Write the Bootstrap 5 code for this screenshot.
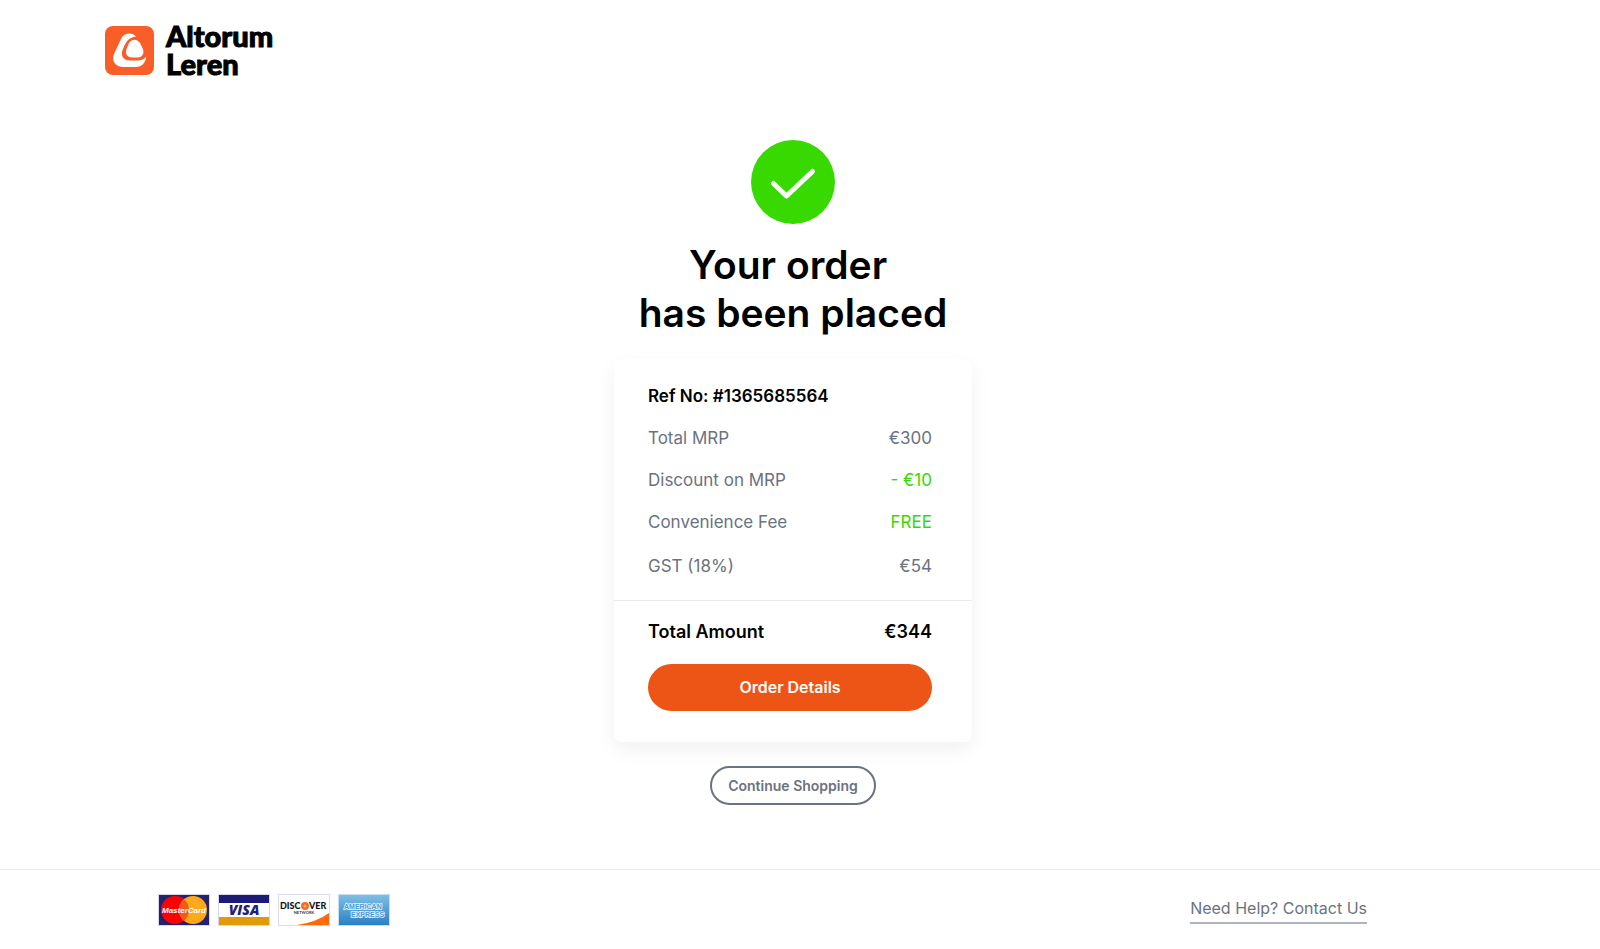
<!DOCTYPE html>
<html lang="en">
<head>
<meta charset="utf-8">
<meta name="viewport" content="width=device-width, initial-scale=1">
<title>Altorum Leren – Order placed</title>
<link href="https://cdn.jsdelivr.net/npm/bootstrap@5.3.0/dist/css/bootstrap.min.css" rel="stylesheet">
<style>
  :root { --ink: #000; --slate: #6b7280; --ok: #38d900; --brand: #ed5516; --rule: #ebebed; }
  body { font-family: Inter, "Open Sans", sans-serif; color: var(--ink); background: #fff; }
  .site-head { padding: 22px 105px 0; }
  .brand-name { font: 900 29px/28px Lato, sans-serif; color: var(--ink); -webkit-text-stroke: 1px var(--ink); }
  .site-main { padding: 62px 14px 64px 0; }
  .placed-title { font-size: 39px; line-height: 48px; font-weight: 600; margin: 17px 0 22px; }
  .order-box { width: 358px; max-width: 100%; border: 0; border-radius: 8px; box-shadow: 0 8px 20px rgba(0, 0, 0, .06); font-size: 17px; line-height: 28px; }
  .order-lines { padding: 23px 40px 20px 34px; gap: 14px; color: var(--slate); }
  .order-lines > :last-child { margin-top: 2px; }
  .order-sum { padding: 17px 40px 31px 34px; border-top: 1px solid var(--rule); }
  .strong-line { color: var(--ink); font-weight: 600; }
  .total-line { font-size: 18px; }
  .ok-text { color: var(--ok); }
  .btn-details { --bs-btn-color: #fff; --bs-btn-bg: var(--brand); --bs-btn-hover-color: #fff; --bs-btn-hover-bg: #d94a10; --bs-btn-border-color: transparent; height: 47px; padding: 0 16px 2px; margin-top: 18px; font-size: 16px; font-weight: 600; }
  .btn-shop { --bs-btn-color: var(--slate); --bs-btn-border-color: var(--slate); --bs-btn-hover-color: #fff; --bs-btn-hover-bg: var(--slate); height: 39px; border-width: 2px; padding: 0 16px; margin-top: 24px; font-size: 14px; font-weight: 600; }
  .site-foot { border-top: 1px solid var(--rule); padding: 24px 233px 24px 158px; }
  .help-link { color: var(--slate); font-size: 16px; line-height: 28px; border-bottom: 2px solid #afb4bf; }
</style>
</head>
<body class="min-vh-100 d-flex flex-column">

<header class="site-head d-flex">
  <a href="#" class="d-flex align-items-center text-decoration-none">
    <svg width="49" height="49" viewBox="0 0 49 49" aria-hidden="true">
      <rect width="49" height="49" rx="8" fill="#fa5e28"/>
      <path d="M31 10.500C28 6.500 20 6 16.500 12L9 28C6 35 11 41 18 41H31C37 41 41 36 41 31C39 33.500 36 34.500 33 34.500H25C18 34.500 15 29 18 23C21 16 23 11.500 31 10.500Z" fill="#fff"/>
      <path d="M24 17C27 12.500 32 12.500 35 17L37.500 22C40 27.500 37 31.500 33 31.500H27C22 31.500 20 27.500 21.500 23Z" fill="#fff"/>
    </svg>
    <span class="brand-name ms-2 ps-1">Altorum<br>Leren</span>
  </a>
</header>

<main class="site-main flex-grow-1 d-flex flex-column align-items-center">
  <svg width="84" height="84" viewBox="0 0 84 84" role="img" aria-label="Success">
    <circle cx="42" cy="42" r="42" fill="#38d900"/>
    <path d="M22.500 43.500L35.500 56L61.500 31.500" fill="none" stroke="#fff" stroke-width="5" stroke-linecap="round" stroke-linejoin="round"/>
  </svg>
  <h1 class="placed-title text-center">Your order&nbsp;<br>has been placed</h1>

  <section class="card order-box">
    <div class="order-lines d-flex flex-column">
      <div class="strong-line">Ref No: #1365685564</div>
      <div class="d-flex justify-content-between"><span>Total MRP</span><span>€300</span></div>
      <div class="d-flex justify-content-between"><span>Discount on MRP</span><span class="ok-text">- €10</span></div>
      <div class="d-flex justify-content-between"><span>Convenience Fee</span><span class="ok-text">FREE</span></div>
      <div class="d-flex justify-content-between"><span>GST (18%)</span><span>€54</span></div>
    </div>
    <div class="order-sum">
      <div class="strong-line total-line d-flex justify-content-between"><span>Total Amount</span><span>€344</span></div>
      <button type="button" class="btn btn-details rounded-pill w-100 d-block">Order Details</button>
    </div>
  </section>

  <button type="button" class="btn btn-shop rounded-pill">Continue Shopping</button>
</main>

<footer class="site-foot d-flex justify-content-between align-items-start">
  <div class="d-flex gap-2">
    <svg width="52" height="32" viewBox="0 0 52 32" role="img" aria-label="MasterCard">
      <rect x=".5" y=".5" width="51" height="31" fill="#22226f" stroke="#d5d8e6"/>
      <circle cx="17" cy="16" r="14" fill="#fe0000"/>
      <circle cx="35" cy="16" r="14" fill="#ffa818"/>
      <path d="M26 5.300A14 14 0 0 1 26 26.700A14 14 0 0 1 26 5.300Z" fill="#f4581a"/>
      <text x="26" y="19" text-anchor="middle" font-family="Liberation Sans" font-size="8" font-weight="700" font-style="italic" fill="#fff">MasterCard</text>
    </svg>
    <svg width="52" height="32" viewBox="0 0 52 32" role="img" aria-label="Visa">
      <rect x=".5" y=".5" width="51" height="31" fill="#fff" stroke="#d5d8e6"/>
      <rect x="1" y="1" width="50" height="8" fill="#1c1c78"/>
      <rect x="1" y="23" width="50" height="8" fill="#e29a0b"/>
      <text x="26" y="21" text-anchor="middle" font-family="Open Sans" font-size="14" font-weight="800" font-style="italic" fill="#20207a">VISA</text>
    </svg>
    <svg width="52" height="32" viewBox="0 0 52 32" role="img" aria-label="Discover Network">
      <rect x=".5" y=".5" width="51" height="31" fill="#fff" stroke="#d9dce8"/>
      <path d="M19 31Q39 28 51 19V31Z" fill="#ff6a0c"/>
      <text x="2" y="15" font-family="Lato" font-size="9" font-weight="900" fill="#111">DISC</text>
      <circle cx="27" cy="12" r="4" fill="#fb6a22"/><circle cx="27" cy="12" r="1.500" fill="#ffab80"/>
      <text x="31" y="15" font-family="Lato" font-size="9" font-weight="900" fill="#111">VER</text>
      <text x="26" y="20" text-anchor="middle" font-family="Lato" font-size="4" font-weight="700" fill="#333">NETWORK</text>
    </svg>
    <svg width="52" height="32" viewBox="0 0 52 32" role="img" aria-label="American Express">
      <defs><linearGradient id="amex" x1="0" y1="0" x2="0" y2="1"><stop offset="0" stop-color="#7fc0e6"/><stop offset="1" stop-color="#2b7fc6"/></linearGradient></defs>
      <rect x=".5" y=".5" width="51" height="31" fill="url(#amex)" stroke="#c9dcef"/>
      <g font-family="Liberation Sans" font-size="7" font-weight="700" fill="#4a9ad4" stroke="#e6f4fc" stroke-width="1.600" paint-order="stroke">
        <text x="6" y="15">AMERICAN</text>
        <text x="13" y="23">EXPRESS</text>
      </g>
    </svg>
  </div>
  <a href="#" class="help-link text-decoration-none">Need Help? Contact Us</a>
</footer>

<script src="https://cdn.jsdelivr.net/npm/bootstrap@5.3.0/dist/js/bootstrap.bundle.min.js"></script>
</body>
</html>
